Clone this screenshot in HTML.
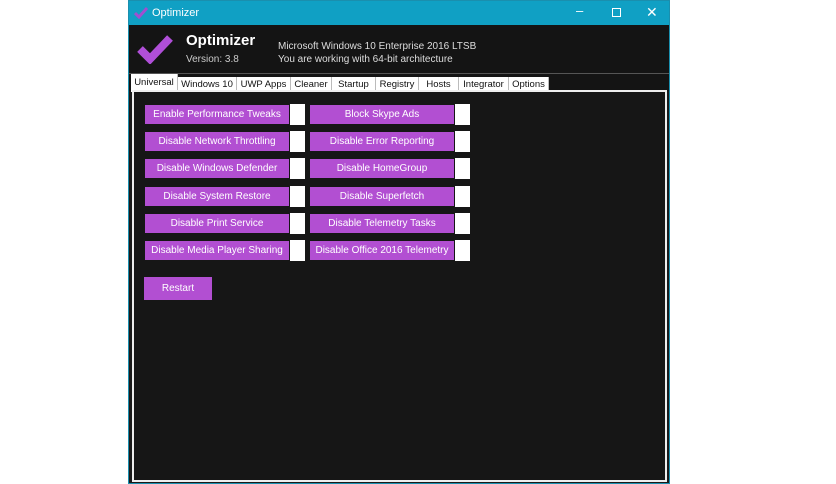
<!DOCTYPE html>
<html><head><meta charset="utf-8"><style>
*{margin:0;padding:0;box-sizing:border-box}
body{width:836px;height:484px;background:#fff;position:relative;overflow:hidden;font-family:"Liberation Sans",sans-serif}
.win{position:absolute;left:128px;top:0;width:542px;height:484px;background:#1a1a1a;border:1px solid #1a8fae}
.title{position:absolute;left:0;top:0;width:540px;height:24px;background:#10a0c4;color:#fff;font-size:11px}
.hdr{position:absolute;left:0;top:24px;width:540px;height:48px;background:#141414}
.tabs{position:absolute;left:0;top:72px;width:540px;height:18px;background:#141414;border-top:1px solid #555}
.tab{position:absolute;top:3px;height:15px;background:#fff;font-size:9.5px;color:#111;text-align:center;line-height:15px;border-right:1px solid #bbb}
.panel{position:absolute;left:3px;top:89px;width:535px;height:392px;background:#161616;border:2px solid #eee}
.b{position:absolute;height:19px;background:#b24fd2;color:#fff;font-size:10px;text-align:center;line-height:19px;white-space:nowrap}
.c{position:absolute;width:15px;height:21px;background:#fff}
</style></head><body>
<div class="win">
<div class="title">
<svg style="position:absolute;left:5px;top:6px" width="14" height="12"><path d="M1 6 L5 10 L13 1" stroke="#a04fd0" stroke-width="3" fill="none"/></svg>
<span style="position:absolute;left:23px;top:6px">Optimizer</span>
<span style="position:absolute;left:447px;top:2px;font-size:13px">–</span>
<span style="position:absolute;left:483px;top:7px;width:9px;height:9px;border:1px solid #fff"></span>
<span style="position:absolute;left:517px;top:3px;font-size:14px">✕</span>
</div>
<div class="hdr">
<svg style="position:absolute;left:8px;top:9px" width="36" height="30"><path d="M3 15 L13 25 L33 4" stroke="#b04fd8" stroke-width="8" fill="none"/></svg>
<div style="position:absolute;left:57px;top:7px;color:#fff;font-size:15px;font-weight:bold">Optimizer</div>
<div style="position:absolute;left:57px;top:29px;color:#ccc;font-size:10px">Version: 3.8</div>
<div style="position:absolute;left:149px;top:15px;color:#ddd;font-size:10px;line-height:13px">Microsoft Windows 10 Enterprise 2016 LTSB<br>You are working with 64-bit architecture</div>
</div>
<div class="tabs">
<div class="tab" style="left:2px;top:0;height:18px;width:47px;line-height:17px">Universal</div>
<div class="tab" style="left:49px;width:59px">Windows 10</div>
<div class="tab" style="left:108px;width:54px">UWP Apps</div>
<div class="tab" style="left:162px;width:41px">Cleaner</div>
<div class="tab" style="left:203px;width:44px">Startup</div>
<div class="tab" style="left:247px;width:43px">Registry</div>
<div class="tab" style="left:290px;width:40px">Hosts</div>
<div class="tab" style="left:330px;width:50px">Integrator</div>
<div class="tab" style="left:380px;width:40px">Options</div>
</div>
<div class="panel">
<div class="b" style="left:11px;top:13px;width:144px">Enable Performance Tweaks</div><div class="c" style="left:156px;top:12px"></div>
<div class="b" style="left:11px;top:40px;width:144px">Disable Network Throttling</div><div class="c" style="left:156px;top:39px"></div>
<div class="b" style="left:11px;top:67px;width:144px">Disable Windows Defender</div><div class="c" style="left:156px;top:66px"></div>
<div class="b" style="left:11px;top:95px;width:144px">Disable System Restore</div><div class="c" style="left:156px;top:94px"></div>
<div class="b" style="left:11px;top:122px;width:144px">Disable Print Service</div><div class="c" style="left:156px;top:121px"></div>
<div class="b" style="left:11px;top:149px;width:144px">Disable Media Player Sharing</div><div class="c" style="left:156px;top:148px"></div>
<div class="b" style="left:176px;top:13px;width:144px">Block Skype Ads</div><div class="c" style="left:321px;top:12px"></div>
<div class="b" style="left:176px;top:40px;width:144px">Disable Error Reporting</div><div class="c" style="left:321px;top:39px"></div>
<div class="b" style="left:176px;top:67px;width:144px">Disable HomeGroup</div><div class="c" style="left:321px;top:66px"></div>
<div class="b" style="left:176px;top:95px;width:144px">Disable Superfetch</div><div class="c" style="left:321px;top:94px"></div>
<div class="b" style="left:176px;top:122px;width:144px">Disable Telemetry Tasks</div><div class="c" style="left:321px;top:121px"></div>
<div class="b" style="left:176px;top:149px;width:144px">Disable Office 2016 Telemetry</div><div class="c" style="left:321px;top:148px"></div>
<div class="b" style="left:10px;top:185px;width:68px;height:23px;line-height:23px">Restart</div>
</div>
</div>
</body></html>
